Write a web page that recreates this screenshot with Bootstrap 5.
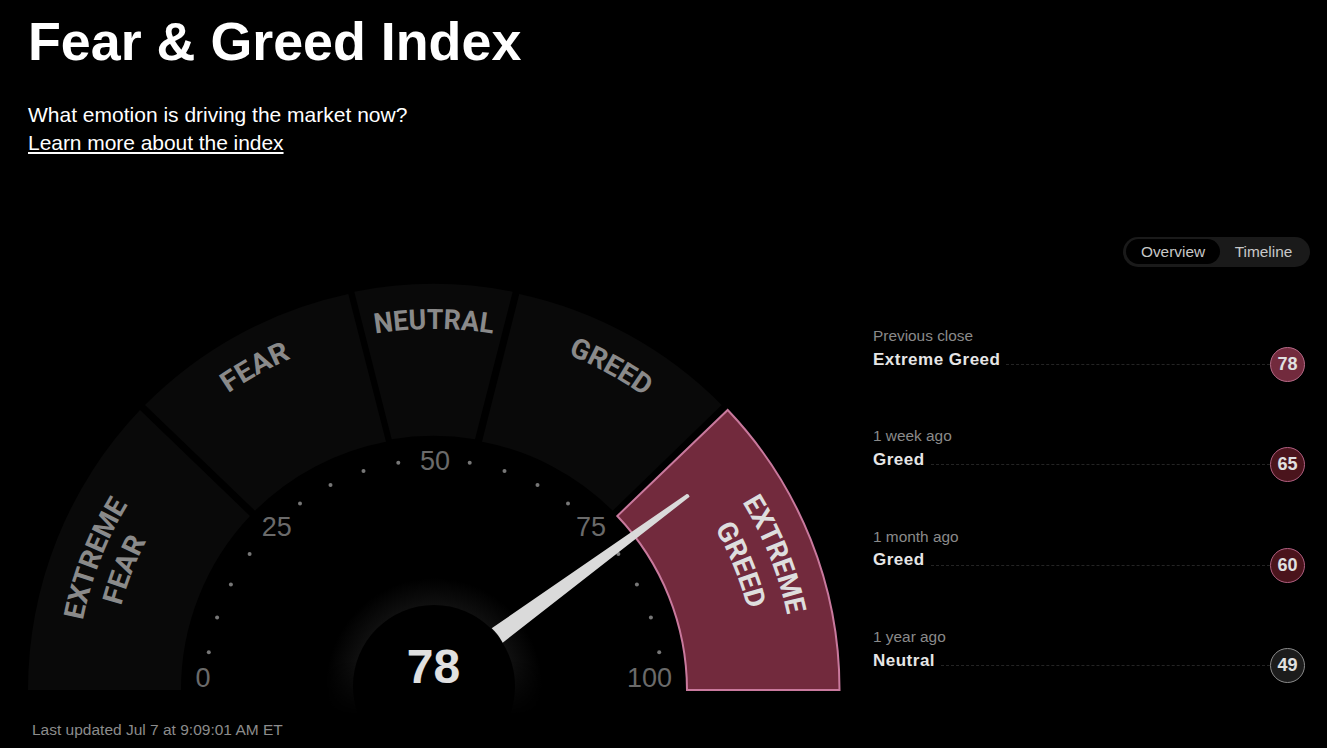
<!DOCTYPE html>
<html lang="en">
<head>
<meta charset="utf-8">
<title>Fear &amp; Greed Index</title>
<link href="https://cdn.jsdelivr.net/npm/bootstrap@5.3.0/dist/css/bootstrap.min.css" rel="stylesheet">
<style>
html,body{height:100%;}
body{background:#000;color:#fff;font-family:"Liberation Sans",Arial,sans-serif;overflow:hidden;}
.fg-title{font-size:53.8px;font-weight:700;line-height:60px;color:#fff;margin:0;}
.fg-intro{font-size:21px;line-height:28px;margin:30px 0 0;color:#fff;}
.fg-intro a{color:#fff;letter-spacing:-.05px;}
.fg-head{padding:11px 0 0 28px;height:237px;}
.fg-gauge{width:860px;flex:none;margin-top:33px;}
.fg-gauge svg{display:block;}
.fg-updated{font-size:15.5px;line-height:18px;color:#8c8c8c;padding-left:32px;margin-top:6px;}
.fg-side{width:467px;flex:none;padding-left:13px;}
.fg-toggle{background:#1a1a1a;height:30px;padding:2px 3px;margin:0 17px 0 auto;width:187px;}
.fg-toggle .btn{font-size:15.4px;line-height:25px;height:25px;padding:0;border:0;color:#c8c8c8;width:94px;border-radius:13px;}
.fg-toggle .btn.active{background:#000;color:#c8c8c8;}
.fg-toggle .btn+.btn{width:87px;}
.fg-rows{margin-top:60px;gap:45.4px;padding-right:22px;}
.fg-when{font-size:15.4px;line-height:17px;color:#8a8a8a;margin-bottom:3px;}
.fg-now{font-size:17px;line-height:20px;font-weight:700;color:#e6e6e6;padding-bottom:10px;letter-spacing:.5px;}
.fg-dash{border-top:1px dashed #242424;min-width:0;margin:0 0 0 6px;}
.fg-score{width:35px;height:35px;flex:none;border:1px solid;font-size:18px;font-weight:700;color:#e0e0e0;}
.fg-s-xg{background:#722a3d;border-color:#b56a87;}
.fg-s-g{background:#4a141c;border-color:#b05f80;}
.fg-s-n{background:#1c1c1c;border-color:#8a8a8a;}
.seg{fill:#090909;}
.seg-on{fill:#722a3d;stroke:#c9799d;stroke-width:2;}
.seg-label{font-family:Roboto,"Liberation Sans",sans-serif;font-weight:700;font-size:28px;fill:#8a8a8a;text-anchor:middle;}
.seg-label-on{fill:#dedede;}
.tick{font-size:27px;fill:#6a6a6a;text-anchor:middle;}
.dot{fill:#777;}
.hub-num{font-size:48px;font-weight:700;fill:#e0e0e0;text-anchor:middle;}
</style>
</head>
<body>
<header class="fg-head">
  <h1 class="fg-title">Fear &amp; Greed Index</h1>
  <p class="fg-intro">What emotion is driving the market now?<br><a href="#">Learn more about the index</a></p>
</header>
<div class="d-flex">
  <section class="fg-gauge">
    <svg width="860" height="445" viewBox="0 270 860 445" role="img" aria-label="Fear and Greed gauge at 78">
      <defs>
        <path id="arc1" d="M180.9 436.9A358 358 0 0 1 687.1 436.9"/>
        <path id="arc2" d="M204.9 460.9A324 324 0 0 1 663.1 460.9"/>
        <path id="arc3" d="M178.7 434.7A361 361 0 0 1 689.3 434.7"/>
        <radialGradient id="glow" gradientUnits="userSpaceOnUse" cx="434" cy="686" r="108">
          <stop offset=".75" stop-color="#0f0f0f"/>
          <stop offset="1" stop-color="#000"/>
        </radialGradient>
        <linearGradient id="fade" gradientUnits="userSpaceOnUse" x1="0" y1="660" x2="0" y2="715">
          <stop offset="0" stop-color="#fff"/>
          <stop offset="1" stop-color="#000"/>
        </linearGradient>
        <mask id="glowmask" maskUnits="userSpaceOnUse" x="300" y="560" width="270" height="155">
          <rect x="300" y="560" width="270" height="155" fill="url(#fade)"/>
        </mask>
      </defs>
      <path class="seg" d="M28 690A406 406 0 0 1 140 410L250 516A253 253 0 0 0 181 690Z"/>
      <path class="seg" d="M145 405A406 406 0 0 1 348.3 294L386 441.7A253 253 0 0 0 255 510.7Z"/>
      <path class="seg" d="M354.3 291.7A406 406 0 0 1 512.7 291.7L475 439.3A253 253 0 0 0 391.7 439.3Z"/>
      <path class="seg" d="M519.3 294A406 406 0 0 1 721.7 405L612.7 510.7A253 253 0 0 0 482 441.7Z"/>
      <path class="seg-on" d="M839.5 690A406 406 0 0 0 727.7 410L617.3 516A253 253 0 0 1 687 690Z"/>

      <text class="seg-label" transform="rotate(-68.8 434 690)"><textPath href="#arc1" startOffset="50%" textLength="125" lengthAdjust="spacingAndGlyphs">EXTREME</textPath></text>
      <text class="seg-label" transform="rotate(-68.8 434 690)"><textPath href="#arc2" startOffset="50%" textLength="70" lengthAdjust="spacingAndGlyphs">FEAR</textPath></text>
      <text class="seg-label" transform="rotate(-29 434 690)"><textPath href="#arc3" startOffset="50%" textLength="72" lengthAdjust="spacingAndGlyphs">FEAR</textPath></text>
      <text class="seg-label"><textPath href="#arc3" startOffset="50%" textLength="118" lengthAdjust="spacingAndGlyphs">NEUTRAL</textPath></text>
      <text class="seg-label" transform="rotate(28.7 434 690)"><textPath href="#arc3" startOffset="50%" textLength="87" lengthAdjust="spacingAndGlyphs">GREED</textPath></text>
      <text class="seg-label seg-label-on" transform="rotate(68.3 434 690)"><textPath href="#arc3" startOffset="50%" textLength="122" lengthAdjust="spacingAndGlyphs">EXTREME</textPath></text>
      <text class="seg-label seg-label-on" transform="rotate(67.8 434 690)"><textPath href="#arc2" startOffset="50%" textLength="88" lengthAdjust="spacingAndGlyphs">GREED</textPath></text>

      <g class="dot">
        <circle cx="208.8" cy="652.3" r="2"/><circle cx="217.1" cy="617.5" r="2"/><circle cx="230.9" cy="584.5" r="2"/><circle cx="249.6" cy="554" r="2"/>
        <circle cx="300" cy="503.5" r="2"/><circle cx="330.5" cy="484.9" r="2"/><circle cx="363.5" cy="471.1" r="2"/><circle cx="398.3" cy="462.8" r="2"/>
        <circle cx="469.7" cy="462.8" r="2"/><circle cx="504.5" cy="471.1" r="2"/><circle cx="537.5" cy="484.9" r="2"/><circle cx="568" cy="503.5" r="2"/>
        <circle cx="618.4" cy="554" r="2"/><circle cx="636.9" cy="584.5" r="2"/><circle cx="650.9" cy="617.5" r="2"/><circle cx="659.2" cy="652.3" r="2"/>
      </g>
      <text class="tick" x="203" y="687">0</text>
      <text class="tick" x="276.7" y="536">25</text>
      <text class="tick" x="435" y="470">50</text>
      <text class="tick" x="591" y="536">75</text>
      <text class="tick" x="649.5" y="687">100</text>

      <circle cx="434" cy="686" r="108" fill="url(#glow)" mask="url(#glowmask)"/>
      <circle cx="434" cy="686" r="81" fill="#000"/>
      <path d="M491.7 628.3L686.7 494Q689 493.5 689.6 496.8L502.7 642.7Q498 634 491.7 628.3Z" fill="#dadada"/>
      <text class="hub-num" x="433.5" y="683">78</text>
    </svg>
    <div class="fg-updated">Last updated Jul 7 at 9:09:01 AM ET</div>
  </section>
  <aside class="fg-side">
    <div class="fg-toggle d-flex rounded-pill">
      <button type="button" class="btn active">Overview</button>
      <button type="button" class="btn">Timeline</button>
    </div>
    <div class="fg-rows d-flex flex-column">
      <div>
        <div class="fg-when">Previous close</div>
        <div class="d-flex align-items-center"><span class="fg-now">Extreme Greed</span><span class="fg-dash flex-grow-1"></span><span class="fg-score fg-s-xg rounded-circle d-flex align-items-center justify-content-center">78</span></div>
      </div>
      <div>
        <div class="fg-when">1 week ago</div>
        <div class="d-flex align-items-center"><span class="fg-now">Greed</span><span class="fg-dash flex-grow-1"></span><span class="fg-score fg-s-g rounded-circle d-flex align-items-center justify-content-center">65</span></div>
      </div>
      <div>
        <div class="fg-when">1 month ago</div>
        <div class="d-flex align-items-center"><span class="fg-now">Greed</span><span class="fg-dash flex-grow-1"></span><span class="fg-score fg-s-g rounded-circle d-flex align-items-center justify-content-center">60</span></div>
      </div>
      <div>
        <div class="fg-when">1 year ago</div>
        <div class="d-flex align-items-center"><span class="fg-now">Neutral</span><span class="fg-dash flex-grow-1"></span><span class="fg-score fg-s-n rounded-circle d-flex align-items-center justify-content-center">49</span></div>
      </div>
    </div>
  </aside>
</div>
<script src="https://cdn.jsdelivr.net/npm/bootstrap@5.3.0/dist/js/bootstrap.bundle.min.js"></script>
</body>
</html>
